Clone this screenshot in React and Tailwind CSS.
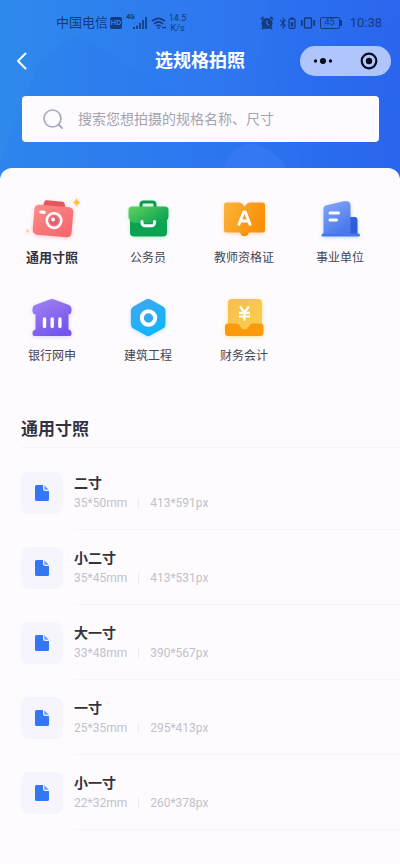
import React, { useState } from "react";
import { FaBluetoothB } from "react-icons/fa";

const CameraIcon = () => (
    <svg viewBox="0 0 56 44" className="w-14 h-11 drop-shadow-sm drop-shadow-red-200" aria-hidden="true">
        <defs>
            <linearGradient id="cam" x1="0" y1="0" x2="1" y2="1">
                <stop offset="0" stopColor="#fb8d87" />
                <stop offset="1" stopColor="#f5646b" />
            </linearGradient>
        </defs>
        <g transform="rotate(5 29 23)">
            <path d="M17 12l1.800-7.500a2.500 2.500 0 0 1 2.300-1.600h15.500a2.500 2.500 0 0 1 2.300 1.600l2.400 7z" fill="#e4565c" />
            <rect x="9.500" y="8" width="39" height="30" rx="4.500" fill="url(#cam)" />
            <rect x="14.500" y="13.500" width="6.500" height="3.200" rx="1.600" fill="#fff" />
            <circle cx="30" cy="22.500" r="7.300" fill="#f4747a" stroke="#fff" strokeWidth="2.600" />
            <circle cx="30" cy="22.500" r="4.600" fill="#e2606c" />
            <circle cx="29" cy="21.500" r="2" fill="#fff" />
        </g>
        <path d="M52.500 0q.7 3.400 4 4.300-3.300.9-4 4.300-.7-3.400-4-4.300 3.300-.9 4-4.300z" fill="#fbc32e" />
        <path d="M3.500 30.500q.4 2 2 2.500-1.600.5-2 2.500-.4-2-2-2.500 1.600-.5 2-2.500z" fill="#fbd97a" />
    </svg>
);

const BriefcaseIcon = () => (
    <svg viewBox="0 0 56 44" className="w-14 h-11 drop-shadow-sm drop-shadow-green-200" aria-hidden="true">
        <defs>
            <linearGradient id="caseTop" x1="0" y1="0" x2="1" y2="0.6">
                <stop offset="0" stopColor="#5fd35e" />
                <stop offset="1" stopColor="#10a552" />
            </linearGradient>
        </defs>
        <path d="M21 12V6.500A2.500 2.500 0 0 1 23.500 4h9A2.500 2.500 0 0 1 35 6.500V12" fill="none" stroke="#0d9a50" strokeWidth="3" />
        <path d="M10 20h37v14.500a4 4 0 0 1-4 4H14a4 4 0 0 1-4-4z" fill="#0ba351" />
        <path d="M12 8.500h33a3.500 3.500 0 0 1 3.500 3.500V18c0 4-3 7-7 7h-26c-4 0-7-3-7-7v-6A3.500 3.500 0 0 1 12 8.500z" fill="url(#caseTop)" />
        <path d="M22 23.500v1.200a3 3 0 0 0 3 3h6.500a3 3 0 0 0 3-3v-1.200" fill="none" stroke="#fff" strokeWidth="3" strokeLinecap="round" />
    </svg>
);

const BookIcon = () => (
    <svg viewBox="0 0 56 44" className="w-14 h-11 drop-shadow-sm drop-shadow-orange-200" aria-hidden="true">
        <defs>
            <linearGradient id="book" x1="0" y1="0" x2="1" y2="0.4">
                <stop offset="0" stopColor="#fab53c" />
                <stop offset="1" stopColor="#fa9008" />
            </linearGradient>
        </defs>
        <circle cx="28.500" cy="34" r="4" fill="#f58300" />
        <path d="M10.500 4.500H23q4 .5 5.500 4.500Q30 5 34 4.500h12.500A2.500 2.500 0 0 1 49 7v25a2.500 2.500 0 0 1-2.500 2.500H34q-3.500 0-5.500 2.500-2-2.500-5.500-2.500H10.500A2.500 2.500 0 0 1 8 32V7a2.500 2.500 0 0 1 2.500-2.500z" fill="url(#book)" />
        <path d="M22.500 27.500l5.200-13.500h1.600L34.500 27.500M24.800 23h7.400" fill="none" stroke="#fff" strokeWidth="2.800" strokeLinejoin="round" />
    </svg>
);

const BuildingIcon = () => (
    <svg viewBox="0 0 56 44" className="w-14 h-11 drop-shadow-sm drop-shadow-blue-200" aria-hidden="true">
        <defs>
            <linearGradient id="tower" x1="0" y1="0" x2="0.5" y2="1">
                <stop offset="0" stopColor="#86a8f8" />
                <stop offset="1" stopColor="#4878ee" />
            </linearGradient>
        </defs>
        <path d="M36 19h6.500a3 3 0 0 1 3 3v15H36z" fill="#2f5ddd" />
        <path d="M11.500 11q0-3 3-3.800L32 3.300q6.500-1 6.500 4.200V38h-27z" fill="url(#tower)" />
        <rect x="9.500" y="35.500" width="38.500" height="3" rx="1.500" fill="#4676ea" />
        <path d="M18 15h8.500M18 22h6.500" stroke="#fff" strokeWidth="3" strokeLinecap="round" />
    </svg>
);

const BankIcon = () => (
    <svg viewBox="0 0 56 44" className="w-14 h-11 drop-shadow-sm drop-shadow-violet-200" aria-hidden="true">
        <defs>
            <linearGradient id="bank" x1="0" y1="0" x2="0.6" y2="1">
                <stop offset="0" stopColor="#a184f0" />
                <stop offset="1" stopColor="#7555ee" />
            </linearGradient>
        </defs>
        <path d="M11 9l15.500-5.700q1.500-.5 3 0L45 9q2.500 1 2.500 3.500V15q0 3-3 3.500v15q3 .5 3 3.500v1q0 2-2 2h-35q-2 0-2-2v-1q0-3 3-3.500v-15q-3-.5-3-3.500v-2.500Q8.500 10 11 9z" fill="url(#bank)" />
        <path d="M20.500 23v7.500M28.200 23v7.500M35.900 23v7.500" stroke="#fff" strokeWidth="3.400" strokeLinecap="round" />
    </svg>
);

const HexagonIcon = () => (
    <svg viewBox="0 0 56 44" className="w-14 h-11 drop-shadow-sm drop-shadow-sky-200" aria-hidden="true">
        <defs>
            <linearGradient id="hex" x1="0" y1="0" x2="0.6" y2="1">
                <stop offset="0" stopColor="#45a6ea" />
                <stop offset="1" stopColor="#10b5ff" />
            </linearGradient>
        </defs>
        <path d="M26 3.600a4.500 4.500 0 0 1 4.400 0L43 10.500a5 5 0 0 1 2.500 4.300v13.500a5 5 0 0 1-2.500 4.300l-12.600 7a4.500 4.500 0 0 1-4.400 0l-12.600-7a5 5 0 0 1-2.500-4.300V14.800a5 5 0 0 1 2.500-4.300z" fill="url(#hex)" />
        <circle cx="28.500" cy="22" r="6.700" fill="#36a8ee" stroke="#fff" strokeWidth="4" />
    </svg>
);

const FinanceIcon = () => (
    <svg viewBox="0 0 56 44" className="w-14 h-11 drop-shadow-sm drop-shadow-amber-200" aria-hidden="true">
        <defs>
            <linearGradient id="bill" x1="0" y1="0" x2="1" y2="1">
                <stop offset="0" stopColor="#f6be4e" />
                <stop offset="1" stopColor="#fbd04f" />
            </linearGradient>
        </defs>
        <rect x="12" y="3" width="34" height="34" rx="4" fill="url(#bill)" />
        <path d="M12 27.500h8q2.500 0 3.500 2l1 1.500q1.500 2.500 4 2.500t4-2.500l1-1.500q1-2 3.500-2h7.500a3 3 0 0 1 3 3v6a3.500 3.500 0 0 1-3.500 3.500H12.500A3.500 3.500 0 0 1 9 36.500v-6a3 3 0 0 1 3-3z" fill="#fb9a0c" />
        <path d="M24 10.500l4.500 6 4.500-6M28.500 16.500v8M23 16.800h11M23 20.500h11" fill="none" stroke="#fff" strokeWidth="2.200" />
    </svg>
);

const DocIcon = () => (
    <svg viewBox="0 0 14 16" className="w-3.5 h-4" aria-hidden="true">
        <path d="M1.500 0H8v3.500A2.500 2.500 0 0 0 10.500 6H14v8.500a1.500 1.500 0 0 1-1.500 1.500h-11A1.500 1.500 0 0 1 0 14.500v-13A1.500 1.500 0 0 1 1.500 0z" fill="#3378f2" />
        <path d="M9.300.3L13.700 4.700H10.500A1.200 1.200 0 0 1 9.300 3.500z" fill="#5f9af8" />
    </svg>
);

const categories = [
    { name: "通用寸照", Icon: CameraIcon },
    { name: "公务员", Icon: BriefcaseIcon },
    { name: "教师资格证", Icon: BookIcon },
    { name: "事业单位", Icon: BuildingIcon },
    { name: "银行网申", Icon: BankIcon },
    { name: "建筑工程", Icon: HexagonIcon },
    { name: "财务会计", Icon: FinanceIcon },
];

const specs = [
    { name: "二寸", size: "35*50mm", pixels: "413*591px" },
    { name: "小二寸", size: "35*45mm", pixels: "413*531px" },
    { name: "大一寸", size: "33*48mm", pixels: "390*567px" },
    { name: "一寸", size: "25*35mm", pixels: "295*413px" },
    { name: "小一寸", size: "22*32mm", pixels: "260*378px" },
];

const StatusBar = () => (
    <div className="flex items-center justify-between h-[45px] pl-14 pr-[18px] text-[#153b7d]">
        <div className="flex items-center gap-0.5">
            <span className="text-[13px] leading-4">中国电信</span>
            <span className="flex items-center justify-center w-3 h-3 rounded-xs bg-[#153b7d] text-[8px] font-bold text-[#2f80ea]">HD</span>
            {/* Signal */}
            <span className="self-start ml-0.5 text-[7px] leading-2 font-bold">4G</span>
            <svg viewBox="0 0 14 12" className="w-3.5 h-3 -ml-1" aria-hidden="true">
                <path d="M1 12v-2M4 12V8.500M7 12V6M10 12V3M13 12V0" stroke="currentColor" strokeWidth="1.700" />
            </svg>
            {/* Wifi */}
            <svg viewBox="0 0 16 12" className="w-4 h-3 ml-0.5" aria-hidden="true">
                <path d="M1 4.200q6.500-5.600 13 0M3 6.800q4.500-3.800 9 0M5.200 9.200q2.300-1.900 4.600 0" fill="none" stroke="currentColor" strokeWidth="1.600" />
                <circle cx="7.500" cy="11" r="1" fill="currentColor" />
                <path d="M11 10.500h4" stroke="currentColor" strokeWidth="1.400" />
            </svg>
            <span className="flex flex-col items-center text-[9px] leading-[10px]">
                <span>14.5</span>
                <span>K/s</span>
            </span>
        </div>
        <div className="flex items-center gap-1">
            {/* Alarm */}
            <svg viewBox="0 0 14 14" className="w-3.5 h-3.5" aria-hidden="true">
                <circle cx="7" cy="7.500" r="5.500" fill="currentColor" />
                <path d="M1 3.500L3.500 1M13 3.500L10.500 1M2 13l1.500-1.500M12 13l-1.500-1.500" stroke="currentColor" strokeWidth="1.800" />
                <path d="M7 4.500v3.200l2 1.500" fill="none" stroke="#2d76ec" strokeWidth="1.200" />
            </svg>
            <span className="flex items-center">
                <FaBluetoothB className="w-2.5 h-3" />
                <svg viewBox="0 0 8 12" className="w-2 h-3" aria-hidden="true">
                    <path d="M2.500 1h3" stroke="currentColor" strokeWidth="1.500" />
                    <rect x="1" y="2" width="6" height="9.300" rx="1.200" fill="none" stroke="currentColor" strokeWidth="1.300" />
                    <path d="M2.800 5h2.400v4.500H2.800z" fill="currentColor" />
                </svg>
            </span>
            {/* Vibrate */}
            <svg viewBox="0 0 16 12" className="w-4 h-3" aria-hidden="true">
                <rect x="4.500" y="1" width="7" height="10" rx="1" fill="none" stroke="currentColor" strokeWidth="1.500" />
                <path d="M1.700 3v6M14.300 3v6" stroke="currentColor" strokeWidth="1.700" />
            </svg>
            {/* Battery */}
            <span className="flex items-center">
                <span className="flex items-center justify-center w-5 h-3 rounded-xs border border-current text-[9px] leading-none">45</span>
                <span className="w-0.5 h-1.5 bg-current" />
            </span>
            <span className="ml-1 text-[13px] leading-4">10:38</span>
        </div>
    </div>
);

const NavBar = () => (
    <div className="grid grid-cols-[1fr_auto_1fr] items-center h-8 px-[9px]">
        <button type="button" aria-label="返回" className="w-6 h-8 pl-1 text-white">
            <svg viewBox="0 0 20 20" className="w-5 h-5" aria-hidden="true">
                <path d="M12.500 2.500L5 10l7.500 7.500" fill="none" stroke="currentColor" strokeWidth="2" strokeLinecap="round" strokeLinejoin="round" />
            </svg>
        </button>
        <h1 className="text-lg leading-6 font-bold text-white">选规格拍照</h1>
        <div className="flex items-center justify-between justify-self-end w-[91px] h-[30px] px-3 rounded-full bg-[#b1c5fd] text-[#060c1c]">
            <button type="button" aria-label="更多">
                <svg viewBox="0 0 22 10" className="w-[22px] h-2.5" aria-hidden="true">
                    <circle cx="3.500" cy="5" r="1.700" fill="currentColor" />
                    <circle cx="11" cy="5" r="3" fill="currentColor" />
                    <circle cx="18.500" cy="5" r="1.700" fill="currentColor" />
                </svg>
            </button>
            <button type="button" aria-label="关闭">
                <svg viewBox="0 0 20 20" className="w-5 h-5" aria-hidden="true">
                    <circle cx="10" cy="10" r="7.300" fill="none" stroke="currentColor" strokeWidth="2.200" />
                    <circle cx="10" cy="10" r="3.200" fill="currentColor" />
                </svg>
            </button>
        </div>
    </div>
);

const App = () => {
    const [keyword, setKeyword] = useState("");
    const [active, setActive] = useState("通用寸照");

    return (
        <div className="relative min-h-screen bg-linear-to-r from-[#2f8aec] via-[#2d78f0] to-[#2a66ee] font-[Roboto,'Noto_Sans_CJK_SC',sans-serif]">
            {/* Faint shapes behind the header */}
            <svg viewBox="0 0 400 190" preserveAspectRatio="none" className="absolute inset-x-0 top-0 w-full h-48" aria-hidden="true">
                <path d="M40 60L76 35 190 100 260 190H0V160z" fill="#2b74f0" opacity="0.15" />
                <path d="M150 0H270L250 100q-50 20-90-10z" fill="#3b82f4" opacity="0.1" />
                <path d="M218 190q2-40 30-48 30 0 52 48z" fill="#4a86fb" opacity="0.3" />
                <path d="M270 60L400 20V190H310z" fill="#2560ea" opacity="0.08" />
            </svg>

            <div className="relative">
                <StatusBar />
                <NavBar />

                <label className="flex items-center gap-3.5 mt-[19px] ml-[22px] mr-[21px] h-[46px] pl-5 pr-4 rounded bg-[#fefbff]">
                    <svg viewBox="0 0 22 22" className="w-[22px] h-[22px] shrink-0 text-[#a9a9bd]" aria-hidden="true">
                        <circle cx="10.500" cy="10.500" r="8.500" fill="none" stroke="currentColor" strokeWidth="1.700" />
                        <path d="M16.500 16.500l3.500 3.500" stroke="currentColor" strokeWidth="1.900" strokeLinecap="round" />
                    </svg>
                    <input
                        type="text"
                        aria-label="搜索规格"
                        value={keyword}
                        onChange={(e) => setKeyword(e.target.value)}
                        placeholder="搜索您想拍摄的规格名称、尺寸"
                        className="flex-1 min-w-0 text-sm text-gray-700 placeholder:text-[#a3a3b1] focus:outline-none"
                    />
                </label>

                <main className="mt-[26px] min-h-[696px] pt-[30px] rounded-t-xl bg-[#fefbff]">
                    {/* Categories */}
                    <div className="grid grid-cols-4 gap-y-6 pl-1 pr-3">
                        {categories.map(({ name, Icon }) => (
                            <button
                                key={name}
                                type="button"
                                onClick={() => setActive(name)}
                                className="flex flex-col items-center gap-1.5 h-[74px]"
                            >
                                <Icon />
                                <span className={active === name ? "text-[13px] leading-5 font-bold text-[#33333f]" : "text-xs leading-5 text-[#454552]"}>
                                    {name}
                                </span>
                            </button>
                        ))}
                    </div>

                    {/* Spec list */}
                    <section className="mt-[47px] pl-[21px]">
                        <h2 className="pb-1.5 border-b border-[#f6f4f9] text-[17px] leading-6 font-bold text-[#33333f]">通用寸照</h2>
                        <ul className="pt-[7px]">
                            {specs.map((spec) => (
                                <li key={spec.name} className="flex items-center gap-[11px] h-[75px]">
                                    <span className="flex items-center justify-center w-[42px] h-[42px] rounded-lg bg-[#f6f5fc]">
                                        <DocIcon />
                                    </span>
                                    <div className="flex flex-col flex-1 justify-center h-full pt-0.5 border-b border-[#f6f4f9]">
                                        <span className="text-sm leading-5 font-bold text-[#33333b]">{spec.name}</span>
                                        <span className="flex items-center text-xs leading-5 text-[#c2c1c9]">
                                            {spec.size}
                                            <span className="w-px h-2.5 mx-[11px] bg-[#eceaf0]" />
                                            {spec.pixels}
                                        </span>
                                    </div>
                                </li>
                            ))}
                        </ul>
                    </section>
                </main>
            </div>
        </div>
    );
};

export default App;
